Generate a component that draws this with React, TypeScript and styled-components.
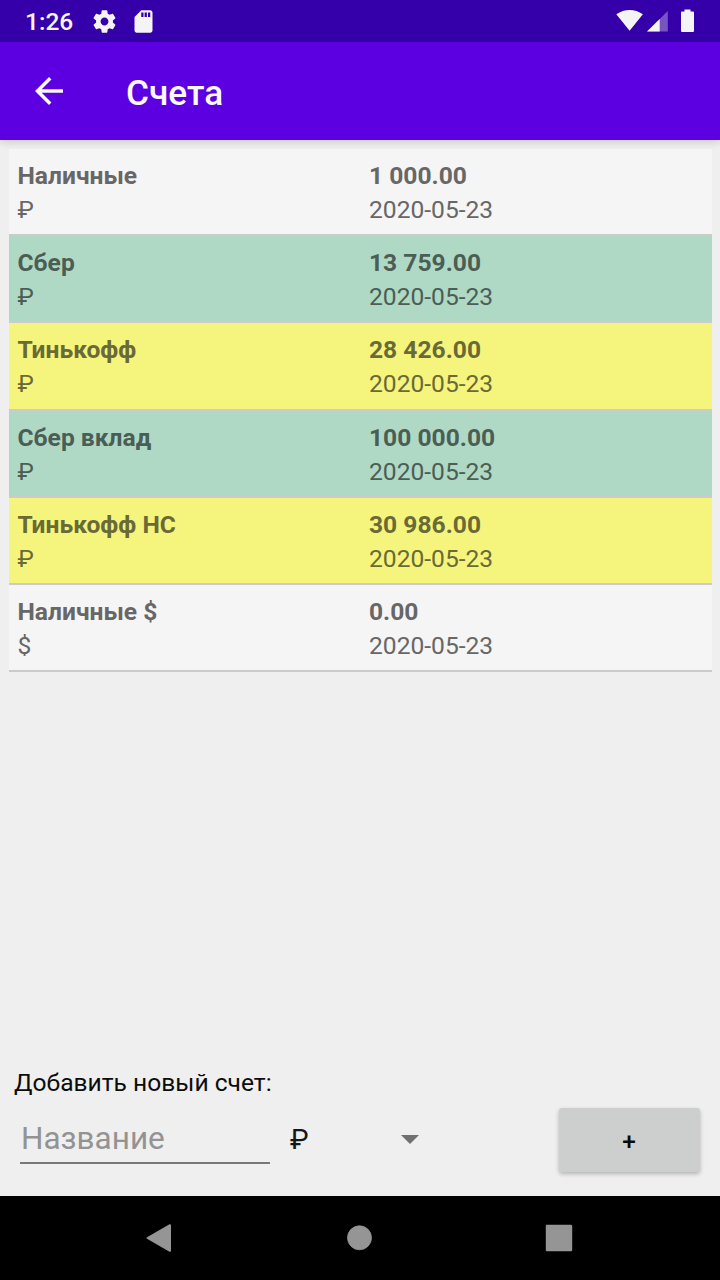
import React from 'react';
import styled, { createGlobalStyle } from 'styled-components';

const GlobalStyle = createGlobalStyle`
  * { box-sizing: border-box; }
  body { margin: 0; background: #efefef; font-family: Roboto, "Liberation Sans", sans-serif; }
`;

const Screen = styled.div`
  display: flex;
  flex-direction: column;
  width: 720px;
  height: 1280px;
  overflow: hidden;
  background: #efefef;
`;

const StatusBar = styled.header`
  display: flex;
  flex: none;
  align-items: center;
  height: 42px;
  padding: 0 25px;
  background: #3500a9;
  color: #f4f4f4;
`;

const Clock = styled.time`
  width: 66px;
  padding-top: 2px;
  font-size: 24.5px;
  font-weight: 500;
  line-height: 28px;
`;

const StatusIcon = styled.svg<{ $gap?: number }>`
  flex: none;
  margin-left: ${(p) => p.$gap ?? 0}px;
  fill: #f4f4f4;
`;

const StatusEnd = styled.div`
  display: flex;
  align-items: center;
  margin-left: auto;
`;

const AppBar = styled.div`
  display: flex;
  flex: none;
  align-items: center;
  height: 98px;
  padding-left: 28px;
  background: #5c00e2;
  color: #f8f8f8;
  box-shadow: 0 2px 8px rgba(0, 0, 0, 0.16);
`;

const BackButton = styled.button`
  display: flex;
  width: 42px;
  height: 42px;
  padding: 0;
  border: 0;
  background: none;
  fill: #f8f8f8;
`;

const Title = styled.h1`
  margin: 4px 0 0 56px;
  font-size: 35.2px;
  font-weight: 500;
  line-height: 41px;
`;

const AccountList = styled.ul`
  margin: 9px 8px 0 9px;
  padding: 0;
  list-style: none;
`;

const AccountRow = styled.li<{ $color: string; $ink: string }>`
  display: grid;
  grid-template-columns: 351.5px 1fr;
  height: 87.24px;
  padding: 10px 0 0 8.5px;
  border-bottom: 2px solid #cbcbcd;
  background: ${(p) => p.$color};
  color: ${(p) => p.$ink};
`;

const Cell = styled.div`
  display: flex;
  flex-direction: column;
  font-size: 24.6px;
  line-height: 34px;
`;

const Strong = styled.span`
  font-weight: 700;
`;

const Detail = styled.span`
  font-weight: 400;
`;

const AddPanel = styled.section`
  margin-top: auto;
  padding: 0 20px 22px 14px;
`;

const AddLabel = styled.label`
  display: block;
  color: #0c0c0c;
  font-size: 24.6px;
  line-height: 30px;
`;

const AddControls = styled.div`
  display: flex;
  align-items: flex-start;
  margin-top: 10px;
  height: 66px;
`;

const NameInput = styled.input`
  width: 250px;
  height: 56px;
  margin-left: 6px;
  padding: 7px 0 0 1px;
  border: 0;
  border-bottom: 2px solid #7b7777;
  border-radius: 0;
  outline: 0;
  background: none;
  font: 400 31.5px Roboto, sans-serif;
  &::placeholder { color: #939393; opacity: 1; }
`;

const CurrencySelect = styled.div`
  display: flex;
  align-items: center;
  justify-content: space-between;
  width: 129px;
  height: 62px;
  margin-left: 20px;
  color: #161616;
  font-size: 28px;
`;

const Caret = styled.svg`
  fill: #707070;
`;

const AddButton = styled.button`
  width: 141px;
  height: 64px;
  margin-left: auto;
  padding: 2px 1px 0 0;
  border: 0;
  border-radius: 3px;
  background: #cdcfce;
  box-shadow: 0 2px 4px rgba(0, 0, 0, 0.25);
  color: #080808;
  font: 500 24.5px Roboto, sans-serif;
`;

const NavBar = styled.nav`
  display: flex;
  flex: none;
  align-items: center;
  justify-content: space-between;
  height: 84px;
  padding: 0 147px 0 145px;
  background: #000;
`;

const NavIcon = styled.svg`
  fill: #959595;
  stroke: #959595;
  stroke-linejoin: round;
`;

const plain = { color: '#f5f5f5', ink: '#676767' };
const green = { color: '#b0d9c5', ink: '#4b5e55' };
const yellow = { color: '#f5f57e', ink: '#6a6a36' };

const accounts = [
  { name: 'Наличные', currency: '₽', amount: '1 000.00', tone: plain },
  { name: 'Сбер', currency: '₽', amount: '13 759.00', tone: green },
  { name: 'Тинькофф', currency: '₽', amount: '28 426.00', tone: yellow },
  { name: 'Сбер вклад', currency: '₽', amount: '100 000.00', tone: green },
  { name: 'Тинькофф НС', currency: '₽', amount: '30 986.00', tone: yellow },
  { name: 'Наличные $', currency: '$', amount: '0.00', tone: plain },
];

export default function App() {
  return (
    <Screen>
      <GlobalStyle />
      <StatusBar>
        <Clock>1:26</Clock>
        <StatusIcon width="27" height="27" viewBox="0 0 24 24">
          <path d="M19.43 12.98c.04-.32.07-.64.07-.98s-.03-.66-.07-.98l2.11-1.65c.19-.15.24-.42.12-.64l-2-3.46c-.12-.22-.39-.3-.61-.22l-2.49 1c-.52-.4-1.08-.73-1.69-.98l-.38-2.65C14.46 2.18 14.25 2 14 2h-4c-.25 0-.46.18-.49.42l-.38 2.65c-.61.25-1.17.59-1.69.98l-2.49-1c-.23-.09-.49 0-.61.22l-2 3.46c-.13.22-.07.49.12.64l2.11 1.65c-.04.32-.07.65-.07.98s.03.66.07.98l-2.11 1.65c-.19.15-.24.42-.12.64l2 3.46c.12.22.39.3.61.22l2.49-1c.52.4 1.08.73 1.69.98l.38 2.65c.03.24.24.42.49.42h4c.25 0 .46-.18.49-.42l.38-2.65c.61-.25 1.17-.59 1.69-.98l2.49 1c.23.09.49 0 .61-.22l2-3.46c.12-.22.07-.49-.12-.64l-2.11-1.65zM12 15.5c-1.93 0-3.5-1.57-3.5-3.5s1.57-3.5 3.5-3.5 3.5 1.57 3.5 3.5-1.57 3.5-3.5 3.5z" />
        </StatusIcon>
        <StatusIcon $gap={12} width="27" height="27" viewBox="0 0 24 24">
          <path d="M18 2h-8L4.02 8 4 20c0 1.1.9 2 2 2h12c1.1 0 2-.9 2-2V4c0-1.1-.9-2-2-2zm-6 6h-2V4h2v4zm3 0h-2V4h2v4zm3 0h-2V4h2v4z" />
        </StatusIcon>
        <StatusEnd>
          <StatusIcon width="28" height="24" viewBox="0 0 28 24">
            <path d="M.3 5.3Q6.5 1 13.6 1t13.3 4.3L13.6 21.8z" />
          </StatusIcon>
          <StatusIcon $gap={3} width="22" height="24" viewBox="0 0 22 24">
            <path d="M20.8 2v20.5H0z" opacity=".35" />
            <path d="M12.7 9.9v12.6H0z" />
          </StatusIcon>
          <StatusIcon $gap={11} width="15" height="24" viewBox="0 0 15 24">
            <path d="M4.5.5h6v2H13q1 0 1 1V22q0 1-1 1H2q-1 0-1-1V3.5q0-1 1-1h2.5z" />
          </StatusIcon>
        </StatusEnd>
      </StatusBar>
      <AppBar>
        <BackButton aria-label="Назад">
          <svg width="42" height="42" viewBox="0 0 24 24">
            <path d="M20 11H7.83l5.59-5.59L12 4l-8 8 8 8 1.41-1.41L7.83 13H20v-2z" />
          </svg>
        </BackButton>
        <Title>Счета</Title>
      </AppBar>
      <AccountList>
        {accounts.map((a) => (
          <AccountRow key={a.name} $color={a.tone.color} $ink={a.tone.ink}>
            <Cell>
              <Strong>{a.name}</Strong>
              <Detail>{a.currency}</Detail>
            </Cell>
            <Cell>
              <Strong>{a.amount}</Strong>
              <Detail>2020-05-23</Detail>
            </Cell>
          </AccountRow>
        ))}
      </AccountList>
      <AddPanel>
        <AddLabel htmlFor="account-name">Добавить новый счет:</AddLabel>
        <AddControls>
          <NameInput id="account-name" placeholder="Название" />
          <CurrencySelect>
            <span>₽</span>
            <Caret width="18" height="9" viewBox="0 0 18 9">
              <path d="M0 0h18L9 9z" />
            </Caret>
          </CurrencySelect>
          <AddButton>+</AddButton>
        </AddControls>
      </AddPanel>
      <NavBar>
        <NavIcon width="28" height="30" viewBox="0 0 28 30">
          <path d="M2.5 15 25 2.2v25.6z" strokeWidth="2" />
        </NavIcon>
        <NavIcon width="26" height="26" viewBox="0 0 26 26">
          <circle cx="13.5" cy="12.8" r="12" strokeWidth=".8" />
        </NavIcon>
        <NavIcon width="28" height="28" viewBox="0 0 28 28">
          <path d="M2 2h24v24H2z" strokeWidth="2.4" />
        </NavIcon>
      </NavBar>
    </Screen>
  );
}
